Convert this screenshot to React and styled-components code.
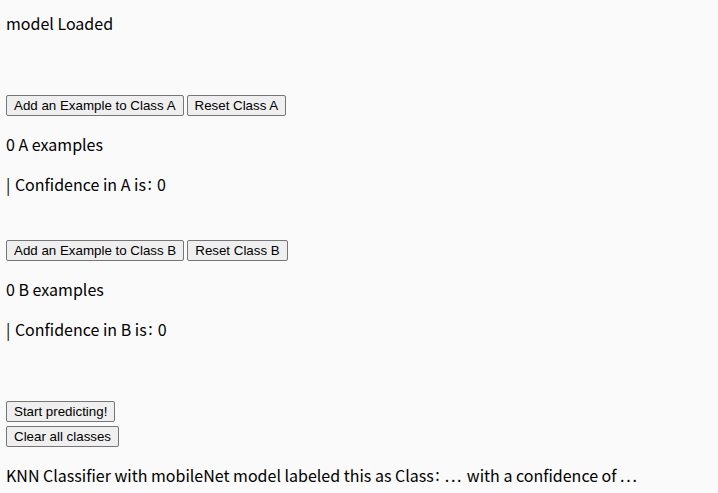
import styled, { createGlobalStyle } from "styled-components";

const GlobalStyle = createGlobalStyle`
  body {
    margin: 6px;
    background: #fafafa;
    color: #000;
    font-family: "Noto Sans CJK JP", "Noto Sans", sans-serif;
    font-size: 16px;
  }
`;

const Page = styled.div`
  display: flex;
  flex-direction: column;
`;

const Status = styled.p`
  margin: 5px 0 0;
  line-height: 24px;
`;

const ClassBlock = styled.div`
  margin-top: ${(props) => props.$top}px;
`;

const ButtonRow = styled.div`
  display: flex;
  gap: 3px;
`;

const Button = styled.button`
  font-family: "Liberation Sans", Arial, sans-serif;
  font-size: 13.33px;
  height: 21px;
  padding: 0 7px;
  background: #efefef;
  border: 1px solid #767676;
  border-radius: 2px;
  color: #000;
`;

const Line = styled.p`
  margin: 16px 0 0;
  line-height: 24px;
`;

// punctuation in the capture sits a little wider than the font's own advance
const Punct = styled.span`
  position: relative;
  top: ${(props) => (props.$raise ? -props.$raise : 0)}px;
  letter-spacing: ${(props) => props.$space}px;
  margin-left: ${(props) => props.$lead || 0}px;
`;

const Controls = styled.div`
  margin-top: 60px;
  display: flex;
  flex-direction: column;
  align-items: flex-start;
  gap: 4px;
`;

const Colon = () => (
  <Punct $space={1.5} $lead={1.5} $raise={1}>
    :
  </Punct>
);

const Dots = () => <Punct $space={1.7}>...</Punct>;

const Bar = () => <Punct $space={1}>|</Punct>;

function ClassSection({ label, top }) {
  return (
    <ClassBlock $top={top}>
      <ButtonRow>
        <Button>Add an Example to Class {label}</Button>
        <Button>Reset Class {label}</Button>
      </ButtonRow>
      <Line>0 {label} examples</Line>
      <Line>
        <Bar /> Confidence in {label} is<Colon /> 0
      </Line>
    </ClassBlock>
  );
}

export default function App() {
  return (
    <Page>
      <GlobalStyle />
      <Status>model Loaded</Status>
      <ClassSection label="A" top={60} />
      <ClassSection label="B" top={44} />
      <Controls>
        <Button>Start predicting!</Button>
        <Button>Clear all classes</Button>
      </Controls>
      <Line>
        KNN Classifier with mobileNet model labeled this as Class<Colon /> <Dots /> with a
        confidence of <Dots />
      </Line>
    </Page>
  );
}
